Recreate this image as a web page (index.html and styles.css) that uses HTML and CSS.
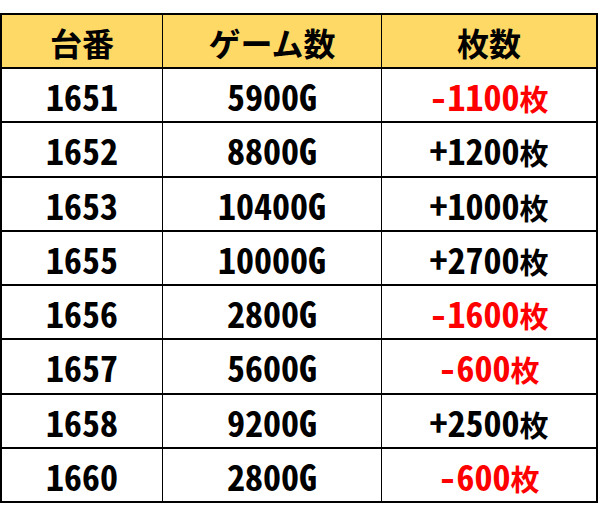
FILE: index.html
```html
<!DOCTYPE html>
<html lang="ja">
<head>
<meta charset="utf-8">
<link rel="stylesheet" href="styles.css">
</head>
<body>
<div class="table">
  <div class="cell head">台番</div>
  <div class="cell head">ゲーム数</div>
  <div class="cell head">枚数</div>

  <div class="cell"><span class="num">1651</span></div>
  <div class="cell"><span class="num">5900G</span></div>
  <div class="cell"><span class="num red">-1100<span class="k">枚</span></span></div>

  <div class="cell"><span class="num">1652</span></div>
  <div class="cell"><span class="num">8800G</span></div>
  <div class="cell"><span class="num">+1200<span class="k">枚</span></span></div>

  <div class="cell"><span class="num">1653</span></div>
  <div class="cell"><span class="num">10400G</span></div>
  <div class="cell"><span class="num">+1000<span class="k">枚</span></span></div>

  <div class="cell"><span class="num">1655</span></div>
  <div class="cell"><span class="num">10000G</span></div>
  <div class="cell"><span class="num">+2700<span class="k">枚</span></span></div>

  <div class="cell"><span class="num">1656</span></div>
  <div class="cell"><span class="num">2800G</span></div>
  <div class="cell"><span class="num red">-1600<span class="k">枚</span></span></div>

  <div class="cell"><span class="num">1657</span></div>
  <div class="cell"><span class="num">5600G</span></div>
  <div class="cell"><span class="num red">-600<span class="k">枚</span></span></div>

  <div class="cell"><span class="num">1658</span></div>
  <div class="cell"><span class="num">9200G</span></div>
  <div class="cell"><span class="num">+2500<span class="k">枚</span></span></div>

  <div class="cell"><span class="num">1660</span></div>
  <div class="cell"><span class="num">2800G</span></div>
  <div class="cell"><span class="num red">-600<span class="k">枚</span></span></div>
</div>
</body>
</html>
```
FILE: styles.css
```css
html, body {
  margin: 0;
  padding: 0;
  background: #ffffff;
}
body {
  padding-top: 13px;
  font-family: "Noto Sans CJK JP", "Liberation Sans", sans-serif;
}
.table {
  display: grid;
  width: 594px;
  grid-template-columns: 160px 218px 214px;
  grid-template-rows: 52px repeat(8, 52.25px);
  column-gap: 1px;
  row-gap: 2px;
  background: #000000;
  border: 2px solid #000000;
}
.cell {
  background: #ffffff;
  display: flex;
  align-items: center;
  justify-content: center;
  color: #000000;
  overflow: hidden;
}
.cell.head {
  background: #ffd966;
  font-weight: 700;
  font-size: 32px;
  line-height: 1;
  padding-top: 2px;
}
.num {
  font-weight: 700;
  font-size: 36px;
  line-height: 1;
  font-feature-settings: "hwid" 1;
  white-space: nowrap;
}
.num .k {
  font-size: 29px;
  font-feature-settings: normal;
}
.red {
  color: #ff0000;
}
```
